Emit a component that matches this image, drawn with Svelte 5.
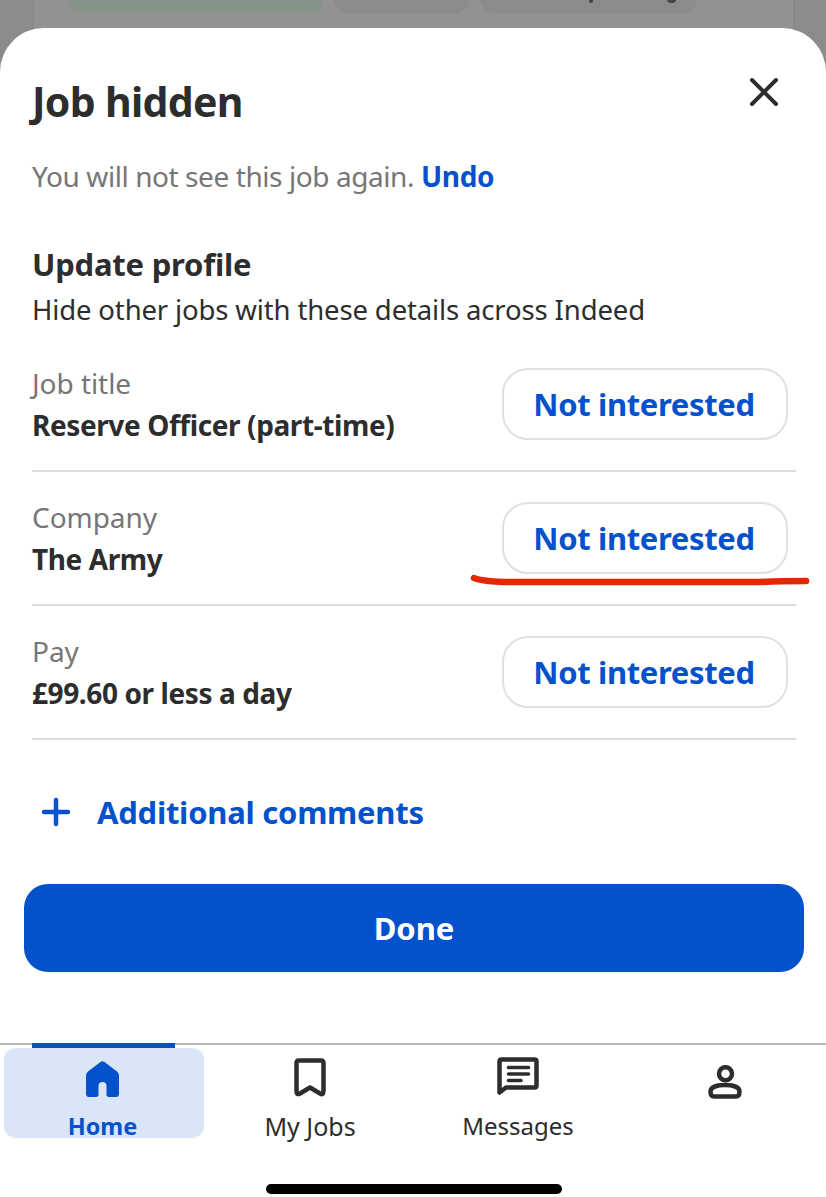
<script lang="ts">
  const rows = [
    { label: 'Job title', value: 'Reserve Officer (part-time)' },
    { label: 'Company', value: 'The Army' },
    { label: 'Pay', value: '£99.60 or less a day' }
  ];
</script>

<div class="page">
  <div class="backdrop">
    <div class="bg-card">
      <span class="chip green"></span>
      <span class="chip"></span>
      <span class="chip wide">
        <i class="tail one"></i>
        <i class="tail two"></i>
      </span>
    </div>
  </div>

  <div class="sheet">
    <header class="sheet-head">
      <h1>Job hidden</h1>
      <button class="close" aria-label="Close">
        <svg width="30" height="30" viewBox="0 0 30 30" fill="none">
          <path d="M3 3 L27 27 M27 3 L3 27" stroke="#2d2d2d" stroke-width="4" stroke-linecap="round" />
        </svg>
      </button>
    </header>

    <p class="note">You will not see this job again. <a href="#undo">Undo</a></p>

    <h2>Update profile</h2>
    <p class="sub">Hide other jobs with these details across Indeed</p>

    <div class="rows">
      {#each rows as row, i}
        <div class="row">
          <div class="row-text">
            <div class="row-label">{row.label}</div>
            <div class="row-value">{row.value}</div>
          </div>
          <div class="btn-wrap">
            <button class="pill">Not interested</button>
            {#if i === 1}
              <svg class="scribble" width="342" height="16" viewBox="0 0 342 16" fill="none">
                <path d="M4 6 C12 9 22 10 40 10 L290 10 C310 9 325 9 336 9" stroke="#e62600" stroke-width="6.5" stroke-linecap="round" />
              </svg>
            {/if}
          </div>
        </div>
      {/each}
    </div>

    <a class="comments" href="#comments">
      <svg width="30" height="30" viewBox="0 0 30 30" fill="none">
        <path d="M15 3 V27 M3 15 H27" stroke="#0451cc" stroke-width="4.5" stroke-linecap="round" />
      </svg>
      <span>Additional comments</span>
    </a>

    <button class="done">Done</button>
  </div>

  <nav class="tabs">
    <div class="tab active">
      <span class="tab-bar"></span>
      <svg width="33" height="36" viewBox="0 0 33 36">
        <path d="M14.5 1 Q16.5 -0.3 18.5 1 L31 10.5 Q33 12 33 15 V33 Q33 36 30 36 H23 Q20.5 36 20.5 33.5 V25 Q20.5 21 16.5 21 Q12.5 21 12.5 25 V33.5 Q12.5 36 10 36 H3 Q0 36 0 33 V15 Q0 12 2 10.5 Z" fill="#0451cc" />
      </svg>
      <span class="tab-label">Home</span>
    </div>
    <div class="tab saved">
      <svg width="32" height="39" viewBox="0 0 32 39" fill="none">
        <path d="M5 2.5 H27 Q29.5 2.5 29.5 5 V33 Q29.5 37.5 26 35.5 L16 29.5 L6 35.5 Q2.5 37.5 2.5 33 V5 Q2.5 2.5 5 2.5 Z" stroke="#2d2d2d" stroke-width="4.5" stroke-linejoin="round" />
      </svg>
      <span class="tab-label">My Jobs</span>
    </div>
    <div class="tab messages">
      <svg width="42" height="38" viewBox="0 0 42 38" fill="none">
        <path d="M4.5 2.5 H37.5 Q39.5 2.5 39.5 4.5 V28.5 Q39.5 30.5 37.5 30.5 H9 L2.5 35.5 V4.5 Q2.5 2.5 4.5 2.5 Z" stroke="#2d2d2d" stroke-width="4.5" stroke-linejoin="round" />
        <path d="M11.5 10.5 H31.5 M11.5 17 H31.5 M11.5 23.5 H24" stroke="#2d2d2d" stroke-width="3.6" stroke-linecap="round" />
      </svg>
      <span class="tab-label">Messages</span>
    </div>
    <div class="tab profile">
      <svg width="34" height="34" viewBox="0 0 34 34" fill="none">
        <circle cx="17.5" cy="8.7" r="6.5" stroke="#2d2d2d" stroke-width="4.5" />
        <path d="M2.5 26.5 C2.5 22 9 20 17 20 C25 20 31.5 22 31.5 26.5 Q31.5 31.5 28 31.5 H6 Q2.5 31.5 2.5 26.5 Z" stroke="#2d2d2d" stroke-width="4.5" />
      </svg>
    </div>
  </nav>

  <div class="home-indicator"></div>
</div>

<style>
  :global(body) {
    margin: 0;
    background: #fff;
  }

  .page {
    width: 826px;
    height: 1197px;
    overflow: hidden;
    display: flex;
    flex-direction: column;
    font-family: "Noto Sans", "Open Sans", sans-serif;
    color: #2d2d2d;
    background: #fff;
  }

  .backdrop {
    height: 80px;
    margin-bottom: -52px;
    background: #8b8b8b;
    padding: 0 32px 0 33px;
    overflow: hidden;
    flex: none;
  }

  .bg-card {
    height: 64px;
    margin-top: -10px;
    background: #929292;
    border: 1px solid #868686;
    border-radius: 0 0 28px 28px;
    padding-left: 34px;
    display: flex;
    gap: 11px;
    align-items: flex-start;
  }

  .chip {
    display: block;
    position: relative;
    width: 135px;
    height: 22px;
    border-radius: 0 0 14px 14px;
    background: #8b8b8b;
  }
  .chip.green { width: 255px; background: #859489; }
  .chip.wide { width: 217px; }

  .tail {
    position: absolute;
    top: 0;
    height: 12px;
    background: #444;
    border-radius: 0 0 4px 4px;
  }
  .tail.one { left: 109px; width: 4px; }
  .tail.two { left: 187px; width: 9px; }

  .sheet {
    position: relative;
    background: #fff;
    border-radius: 44px 44px 0 0;
    padding: 0 30px 0 32px;
    flex: 1;
    display: flex;
    flex-direction: column;
  }

  .sheet-head {
    display: flex;
    justify-content: space-between;
    align-items: flex-start;
    height: 98px;
  }

  h1 {
    margin: 47px 0 0;
    font-size: 41px;
    line-height: 52px;
    font-weight: 700;
    letter-spacing: -0.7px;
  }

  .close {
    margin: 49px 17px 0 0;
    padding: 0;
    border: none;
    background: none;
    line-height: 0;
  }

  .note {
    margin: 30px 0 0;
    font-size: 28px;
    line-height: 40px;
    color: #767676;
    letter-spacing: -0.42px;
  }

  .note a {
    color: #0451cc;
    font-weight: 700;
    text-decoration: none;
    letter-spacing: -0.3px;
  }

  h2 {
    margin: 47px 0 0;
    font-size: 31px;
    line-height: 42px;
    font-weight: 700;
    letter-spacing: -0.22px;
  }

  .sub {
    margin: 5px 0 0;
    font-size: 27.5px;
    line-height: 40px;
    letter-spacing: -0.14px;
  }

  .rows {
    margin-top: 8px;
  }

  .row {
    display: flex;
    justify-content: space-between;
    align-items: flex-start;
    height: 106px;
    padding-top: 26px;
    border-bottom: 2px solid #dcdcdc;
  }

  .row-label {
    font-size: 28px;
    line-height: 38px;
    color: #767676;
    letter-spacing: -0.05px;
  }

  .row-value {
    margin-top: 4px;
    font-size: 28px;
    line-height: 38px;
    font-weight: 700;
    letter-spacing: -0.4px;
  }

  .btn-wrap {
    position: relative;
    margin: 4px 8px 0 0;
  }

  .pill {
    display: block;
    width: 286px;
    height: 72px;
    padding: 0 2px 0 0;
    background: #fff;
    border: 2px solid #e0e0e0;
    border-radius: 26px;
    color: #0451cc;
    font: 700 31px "Noto Sans", sans-serif;
    letter-spacing: -0.35px;
  }

  .scribble {
    position: absolute;
    left: -32px;
    top: 70px;
  }

  .comments {
    display: flex;
    align-items: center;
    gap: 26px;
    margin: 50px 0 0 9px;
    color: #0451cc;
    font-size: 31px;
    line-height: 44px;
    font-weight: 700;
    text-decoration: none;
    letter-spacing: -0.25px;
  }

  .done {
    margin: 50px 0 0 -8px;
    width: 780px;
    height: 88px;
    border: none;
    border-radius: 24px;
    background: #0451cc;
    color: #fff;
    font: 700 31px "Noto Sans", sans-serif;
  }

  .tabs {
    flex: none;
    height: 139px;
    display: grid;
    grid-template-columns: 208px 206px 208px 204px;
    align-items: start;
    border-top: 2px solid #b9b9b9;
  }

  .tab {
    position: relative;
    display: flex;
    flex-direction: column;
    align-items: center;
    height: 92px;
  }

  .tab.saved { padding: 13px 2px 0 0; }
  .tab.messages { padding-top: 12px; }
  .tab.profile { padding: 20px 0 0 2px; }

  .tab.active {
    margin: 3px 4px 0;
    background: #dae5f7;
    border-radius: 12px;
    padding: 13px 3px 0 0;
    height: 90px;
    box-sizing: border-box;
  }

  .tab-bar {
    position: absolute;
    top: -5px;
    left: 28px;
    width: 143px;
    height: 5px;
    background: #0451cc;
  }

  .tab-label {
    position: absolute;
    top: 65px;
    font-size: 24px;
    line-height: 32px;
  }

  .tab.saved .tab-label {
    font-size: 25px;
  }

  .tab.active .tab-label {
    color: #0451cc;
    font-weight: 700;
    font-size: 23.5px;
    top: 62px;
  }

  .home-indicator {
    flex: none;
    width: 296px;
    height: 10px;
    margin: 0 0 3px 266px;
    border-radius: 5px;
    background: #000;
  }
</style>
